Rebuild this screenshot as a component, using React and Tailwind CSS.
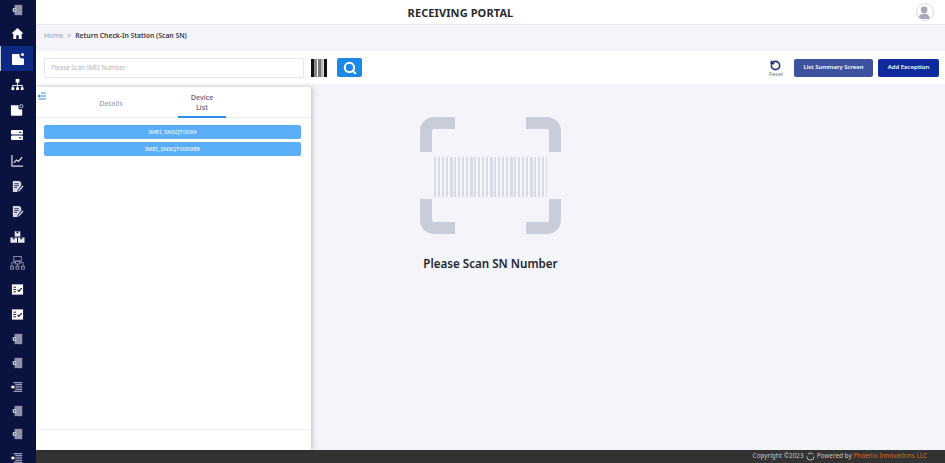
import { Search, RotateCcw } from 'lucide-react';

const Doc = () => (
    <svg viewBox="0 0 14 14" className="w-[14px] h-[14px]">
        <path d="M1 2h7.500v1.500a3 3 0 0 0 3 3H13V12a1 1 0 0 1-1 1H2a1 1 0 0 1-1-1z" fill="#fff" />
        <circle cx="11.500" cy="2.500" r="1.500" fill="#fff" />
    </svg>
);
const DocSearch = () => (
    <svg viewBox="0 0 16 14" className="w-[15px] h-[14px]">
        <path d="M1 2h8v2.500a2 2 0 0 0 2 2h2V12a1 1 0 0 1-1 1H2a1 1 0 0 1-1-1z" fill="#fff" />
        <circle cx="12" cy="3" r="1.800" fill="none" stroke="#c8cbd8" strokeWidth="1" />
    </svg>
);
const Home = () => (
    <svg viewBox="0 0 14 14" className="w-[13px] h-[13px]">
        <path d="M7 1 .5 7h2v6h3.200V9h2.600v4h3.200V7h2z" fill="#fff" />
    </svg>
);
const Org = () => (
    <svg viewBox="0 0 14 14" className="w-[13px] h-[13px]" fill="#fff">
        <rect x="5" y="1" width="4" height="4" />
        <rect x="6.500" y="5" width="1" height="3" />
        <rect x="1.500" y="7.500" width="11" height="1" />
        <rect x="1.500" y="8" width="1" height="2" />
        <rect x="11.500" y="8" width="1" height="2" />
        <rect x="6.500" y="8" width="1" height="2" />
        <rect x="0.500" y="10" width="3" height="3" />
        <rect x="5.500" y="10" width="3" height="3" />
        <rect x="10.500" y="10" width="3" height="3" />
    </svg>
);
const Server = () => (
    <svg viewBox="0 0 14 14" className="w-[14px] h-[14px]">
        <rect x="1" y="2" width="12" height="4.500" rx="1" fill="#fff" />
        <rect x="1" y="7.500" width="12" height="4.500" rx="1" fill="#fff" />
        <rect x="9" y="3.800" width="2.500" height="1" fill="#0a1240" />
        <rect x="9" y="9.300" width="2.500" height="1" fill="#0a1240" />
    </svg>
);
const Chart = () => (
    <svg viewBox="0 0 14 14" className="w-[13px] h-[13px]" fill="none" stroke="#dcdee8" strokeWidth="1.300">
        <path d="M1 1v12h12" />
        <path d="M3 9.500 6 6.500l2 1.500 4-4.500" />
    </svg>
);
const Note = () => (
    <svg viewBox="0 0 14 14" className="w-[13px] h-[13px]">
        <path d="M2 1h7l2 2v3l-4 5v2H2z" fill="#d6d8e2" />
        <path d="M3.500 4h5M3.500 6h5M3.500 8h3" stroke="#0a1240" strokeWidth="0.800" />
        <path d="m8 11 4.500-5 1 1L9 12l-1.300.3z" fill="#d6d8e2" />
    </svg>
);
const Boxes = () => (
    <svg viewBox="0 0 16 14" className="w-[15px] h-[14px]" fill="#e6e7ee">
        <path d="M5 1h6v5.500H5z" />
        <path d="M.5 7.500h7V13h-7zM8.500 7.500h7V13h-7z" />
        <path d="M7 1h2v2H7zM3 7.500h2v2H3zM11 7.500h2v2h-2z" fill="#0a1240" />
    </svg>
);
const Network = () => (
    <svg viewBox="0 0 16 16" className="w-[15px] h-[16px]" fill="none" stroke="#8f93a8" strokeWidth="1">
        <rect x="4" y="1" width="8" height="5" />
        <rect x="5.500" y="6" width="5" height="3" />
        <path d="M5.500 7.500H2v4M10.500 7.500H14v4M8 9v2.500" />
        <rect x="0.700" y="11.500" width="3" height="3" />
        <rect x="6.500" y="11.500" width="3" height="3" />
        <rect x="12.300" y="11.500" width="3" height="3" />
    </svg>
);
const Check = () => (
    <svg viewBox="0 0 14 14" className="w-[13px] h-[13px]">
        <rect x="1" y="1.500" width="12" height="11" fill="#fff" />
        <path d="M2.500 4.500h3M2.500 7h3M2.500 9.500h3" stroke="#0a1240" strokeWidth="1" />
        <path d="m7 7.500 1.500 1.500 3-3.500" stroke="#0a1240" strokeWidth="1.200" fill="none" />
    </svg>
);
const Exit = () => (
    <svg viewBox="0 0 12 14" className="w-[11px] h-[12px]">
        <rect x="2.500" y="1" width="9" height="12" fill="#8e91a6" />
        <rect x="0.500" y="5" width="4" height="4" fill="#e4e5ec" />
        <rect x="2" y="6.200" width="1.600" height="1.600" fill="#0a1240" />
    </svg>
);
const Lines = () => (
    <svg viewBox="0 0 14 14" className="w-[12px] h-[12px]">
        <path d="M3 2h10M5 4.500h8M5 7h8M5 9.500h8M3 12h10" stroke="#c9ccd9" strokeWidth="1.200" />
        <rect x="0.500" y="5.500" width="3.500" height="3" fill="#fff" />
    </svg>
);

const NAV = [
    { icon: Exit, cls: 'h-[20px]' },
    { icon: Home, cls: 'h-[26px]' },
    { icon: Doc, cls: 'h-[25px]', active: true },
    { icon: Org, cls: 'h-[26px]' },
    { icon: DocSearch, cls: 'h-[25.5px]' },
    { icon: Server, cls: 'h-[25.5px]' },
    { icon: Chart, cls: 'h-[25.5px]' },
    { icon: Note, cls: 'h-[25.5px]' },
    { icon: Note, cls: 'h-[25.5px]' },
    { icon: Boxes, cls: 'h-[25.5px]' },
    { icon: Network, cls: 'h-[26px]' },
    { icon: Check, cls: 'h-[26px]' },
    { icon: Check, cls: 'h-[25px]' },
    { icon: Exit, cls: 'h-[24.5px]' },
    { icon: Exit, cls: 'h-[23.5px]' },
    { icon: Lines, cls: 'h-[23.5px]' },
    { icon: Exit, cls: 'h-[24px]' },
    { icon: Exit, cls: 'h-[23.5px]' },
    { icon: Lines, cls: 'h-[23.5px]' },
];

const BAR_WIDTHS = [2, 2, 2, 2, 3, 2, 2, 2, 2, 3, 2, 2, 2, 2, 3, 2, 2, 2, 2, 3, 2, 2, 2, 2, 3, 2, 2, 2, 1];

function ScanGraphic() {
    return (
        <svg viewBox="0 0 141 118" className="w-[141px] h-[118px]" fill="none">
            <g stroke="#c9cdda" strokeWidth="12">
                <path d="M6 35V14a8 8 0 0 1 8-8h21" />
                <path d="M106 6h21a8 8 0 0 1 8 8v21" />
                <path d="M6 82v21a8 8 0 0 0 8 8h21" />
                <path d="M106 111h21a8 8 0 0 0 8-8V82" />
            </g>
            {BAR_WIDTHS.map((w, i) => (
                <rect key={i} x={14 + i * 4} y="40" width={w} height="40" fill="#d9dce6" />
            ))}
        </svg>
    );
}

export default function App() {
    return (
        <div className="flex h-screen w-screen overflow-hidden bg-[#f4f5fa] font-['Noto_Sans',sans-serif]">
            <aside className="w-[36px] shrink-0 bg-[#0a1240] pr-[3px] overflow-hidden">
                {NAV.map((n, i) => {
                    const Icon = n.icon;
                    return (
                        <div
                            key={i}
                            className={`flex items-center justify-center pl-[1px] ${n.cls} ${n.active ? 'bg-[#0c2a82] border-l border-[#c9cdda]' : ''}`}
                        >
                            <Icon />
                        </div>
                    );
                })}
            </aside>

            <div className="flex-1 flex flex-col min-w-0">
                <header className="relative h-[25px] shrink-0 bg-white border-b border-[#e6e7ec] flex items-center justify-center pr-[60px]">
                    <span className="text-[11px] font-bold tracking-[0.1px] text-[#2a2a2a] leading-none">RECEIVING PORTAL</span>
                    <div className="absolute right-[11px] top-[3px] w-[18px] h-[18px] rounded-full border border-[#dcdde3] bg-white overflow-hidden">
                        <svg viewBox="0 0 18 18" className="w-full h-full">
                            <circle cx="8" cy="6.500" r="3.800" fill="#a7a9ba" />
                            <path d="M1.500 17c0-4 3-6 6.500-6s6.500 2 6.500 6z" fill="#a7a9ba" />
                        </svg>
                    </div>
                </header>

                <div className="h-[26px] shrink-0 flex items-center pl-[8px] pb-[4px] text-[6.800px] leading-none">
                    <span className="text-[#9a9dae]">Home</span>
                    <span className="text-[#9a9dae] mx-[4px]">&gt;</span>
                    <span className="font-semibold text-[#3a3a42]">Return Check-In Station (Scan SN)</span>
                </div>

                <div className="h-[33px] shrink-0 bg-white flex items-center pl-[8px] pr-[6px]">
                    <div className="w-[260px] h-[20px] border border-[#e2e4f4] rounded-[2px] flex items-center pl-[6px] text-[6.200px] text-[#b4b6c2]">
                        Please Scan IMEI Number
                    </div>
                    <svg viewBox="0 0 16 18" className="ml-[7px] w-[16px] h-[18px]">
                        <path d="M0 0h3.500v18H0zM4.500 0h1v18h-1zM13 0h3v18h-3z" fill="#111" />
                        <path d="M7 0h3.500v18H7zM11.500 0h.8v18h-.8z" fill="#777" />
                    </svg>
                    <button className="ml-[10px] w-[25px] h-[19px] rounded-[2px] bg-[#1e88e5] flex items-center justify-center">
                        <Search size={14} strokeWidth={3.500} className="text-white" />
                    </button>
                    <div className="ml-auto flex flex-col items-center mr-[11px] pt-[2px]">
                        <RotateCcw size={11} strokeWidth={3.500} className="text-[#1d2f7d]" />
                        <span className="text-[5.500px] leading-none mt-[1px] text-[#80838f]">Reset</span>
                    </div>
                    <button className="w-[79px] h-[18px] rounded-[2px] bg-[#3f52a0] text-white text-[5.900px] font-semibold">List Summary Screen</button>
                    <button className="ml-[5px] w-[61px] h-[18px] rounded-[2px] bg-[#0f2a9c] text-white text-[6px] font-semibold">Add Exception</button>
                </div>

                <div className="flex-1 flex min-h-0">
                    <section className="relative w-[275px] shrink-0 mt-[3px] bg-white rounded-tr-[2px] shadow-[2px_0_5px_rgba(0,0,0,0.18)] flex flex-col">
                        <svg viewBox="0 0 8 8" className="absolute left-[2px] top-[5px] w-[8px] h-[8px]">
                            <circle cx="1.300" cy="4" r="1.300" fill="#2d8ee6" />
                            <path d="M3 1h5M3 4h5M1 7h7" stroke="#2d8ee6" strokeWidth="1" />
                        </svg>
                        <div className="h-[31px] shrink-0 border-b border-[#ebedf2] flex text-[7.200px] leading-[10px] text-center">
                            <div className="ml-[54px] w-[42px] flex items-center justify-center pt-[2px] text-[#a0a3b1] font-medium">Details</div>
                            <div className="ml-[46px] w-[48px] h-[31px] border-b-2 border-[#2f8fe6] pt-[5px] text-[#5b6078] font-medium">
                                Device<br />List
                            </div>
                        </div>
                        <div className="flex-1 px-[8px] pt-[7px] flex flex-col gap-[3px]">
                            {['IMEI_SNSQT0099', 'IMEI_SNSQT009988'].map(s => (
                                <div key={s} className="w-[257px] h-[14px] rounded-[2px] bg-[#5aaef5] text-white text-[6px] flex items-center justify-center">
                                    {s}
                                </div>
                            ))}
                        </div>
                        <div className="h-[21px] shrink-0 border-t border-[#eef0f4]" />
                    </section>

                    <main className="flex-1 pt-[33px] pl-[109px]">
                        <div className="w-[141px] flex flex-col items-center">
                            <ScanGraphic />
                            <p className="mt-[20px] text-[11.600px] leading-[17px] font-semibold text-[#26262c] whitespace-nowrap">Please Scan SN Number</p>
                        </div>
                    </main>
                </div>

                <footer className="h-[13px] shrink-0 bg-[#333333] flex items-center justify-end pr-[18px] text-[6.400px] leading-none text-[#c4c4c4]">
                    <span>Copyright ©2023</span>
                    <svg viewBox="0 0 10 10" className="w-[9px] h-[9px] mx-[2px]" fill="none" stroke="#c4c4c4" strokeWidth="1">
                        <path d="M2 2.500A4 4 0 0 1 8 2.500M9 5a4 4 0 0 1-8 0" />
                    </svg>
                    <span>Powered by&nbsp;</span>
                    <span className="text-[#d2691e]">Phoenix Innovations LLC</span>
                </footer>
            </div>
        </div>
    );
}
